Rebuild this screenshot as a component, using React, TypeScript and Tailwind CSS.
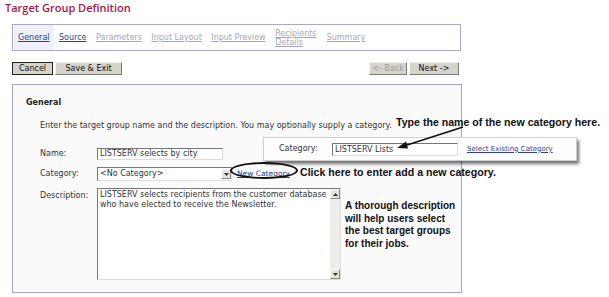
import React from 'react';

const tabs = [
  { label: 'General', active: true, enabled: true },
  { label: 'Source', enabled: true },
  { label: 'Parameters' },
  { label: 'Input Layout' },
  { label: 'Input Preview' },
  { label: 'Recipients Details', twoLine: true },
  { label: 'Summary' },
];

const TabBar = () => (
  <div className="ml-[12px] mt-[8px] flex h-[27px] w-[449px] items-stretch border border-[#a9a9d0] bg-white pl-[1px]">
    {tabs.map((t) => (
      <div
        key={t.label}
        className={`flex items-center px-[4px] mr-[1.5px] ${t.active ? 'bg-[#eef0fa]' : ''}`}
      >
        <span
          className={`underline leading-[9px] ${t.twoLine ? 'w-[42px]' : ''} ${
            t.enabled ? 'text-[#2d3f93]' : 'text-[#a6a6b8]'
          }`}
        >
          {t.label}
        </span>
      </div>
    ))}
  </div>
);

const Btn = ({
  children,
  className = '',
  disabled = false,
  focused = false,
}: {
  children: React.ReactNode;
  className?: string;
  disabled?: boolean;
  focused?: boolean;
}) => (
  <button
    className={`h-[13px] border bg-[#d6d3cb] text-[8px] leading-[11px] ${
      focused ? 'border-[#222]' : 'border-t-[#f4f4f4] border-l-[#f4f4f4] border-r-[#7a7a7a] border-b-[#7a7a7a]'
    } ${disabled ? 'text-[#9e9e9e]' : 'text-[#111]'} ${className}`}
  >
    {children}
  </button>
);

const ButtonRow = () => (
  <div className="ml-[12px] mt-[11px] flex w-[447px] justify-between">
    <div className="flex gap-[2px]">
      <Btn focused className="w-[41px]">Cancel</Btn>
      <Btn className="w-[67px]">Save &amp; Exit</Btn>
    </div>
    <div className="flex gap-[2px]">
      <Btn disabled className="w-[38px]">&lt;- Back</Btn>
      <Btn className="w-[50px]">Next -&gt;</Btn>
    </div>
  </div>
);

const Arrow = ({ up }: { up?: boolean }) => (
  <div className="flex h-[10px] w-[10px] items-center justify-center border border-t-white border-l-white border-r-[#888] border-b-[#888] bg-[#e6e3da]">
    <svg width="5" height="3" viewBox="0 0 5 3">
      <path d={up ? 'M0 3 L2.5 0 L5 3 Z' : 'M0 0 L2.5 3 L5 0 Z'} fill="#333" />
    </svg>
  </div>
);

const Panel = () => (
  <div className="ml-[12px] mt-[9px] h-[209px] w-[450px] border border-[#a3a3cc] bg-[#fafafa] pl-[13px] pt-[12px]">
    <div className="font-bold text-[#222]">General</div>
    <div className="mt-[11px] pl-[14px] text-[#333]">
      Enter the target group name and the description. You may optionally supply a category.
    </div>
    <div className="mt-[16px] flex flex-col gap-[7px] pl-[14px] text-[#333]">
      <div className="flex items-center">
        <span className="w-[57px]">Name:</span>
        <div className="h-[12px] w-[126px] border border-t-[#777] border-l-[#777] border-r-[#ddd] border-b-[#ddd] bg-white pl-[2px] leading-[10px]">
          LISTSERV selects by city
        </div>
      </div>
      <div className="flex items-center">
        <span className="w-[57px]">Category:</span>
        <div className="flex h-[14px] w-[135px] items-center border border-t-[#777] border-l-[#777] border-r-[#ddd] border-b-[#ddd] bg-white pl-[2px]">
          <span className="flex-1 leading-[10px]">&lt;No Category&gt;</span>
          <Arrow />
        </div>
        <span className="ml-[5px] text-[7.5px] text-[#2d3f93] underline">New Category</span>
      </div>
      <div className="flex items-start">
        <span className="w-[57px] pt-[2px]">Description:</span>
        <div className="flex h-[92px] w-[244px] border border-t-[#777] border-l-[#777] border-r-[#ddd] border-b-[#ddd] bg-white">
          <div className="flex-1 pl-[2px] pt-[1px] leading-[9.5px]">
            LISTSERV selects recipients from the customer database who have elected to receive the Newsletter.
          </div>
          <div className="flex w-[10px] flex-col justify-between bg-[#eeece6]">
            <Arrow up />
            <Arrow />
          </div>
        </div>
      </div>
    </div>
  </div>
);

export default function App() {
  return (
    <div className="relative h-[297px] w-[609px] overflow-hidden bg-white font-['DejaVu_Sans',Verdana,sans-serif] text-[8px]">
      <h1 className="h-[16px] pl-[5px] pt-[1px] font-['Open_Sans',sans-serif] text-[11px] font-semibold leading-[14px] text-[#a3174a]">
        Target Group Definition
      </h1>
      <TabBar />
      <ButtonRow />
      <Panel />

      {/* category popover */}
      <div className="absolute left-[263px] top-[137px] flex h-[24px] w-[314px] items-center border border-[#cfcfcf] bg-[#fdfdfd] pl-[15px] text-[#333] shadow-[2px_3px_3px_rgba(0,0,0,0.55)]">
        <span className="w-[53px]">Category:</span>
        <div className="h-[13px] w-[126px] border border-t-[#777] border-l-[#777] border-r-[#ddd] border-b-[#ddd] bg-white pl-[2px] leading-[11px]">
          LISTSERV Lists
        </div>
        <span className="ml-[9px] text-[7px] text-[#2d3f93] underline">Select Existing Category</span>
      </div>

      {/* callouts */}
      <div className="absolute left-[230px] top-[162px] h-[17px] w-[68px] rounded-[50%] border-2 border-[#111]" />
      <svg className="absolute left-0 top-0" width="609" height="297">
        <line x1="463" y1="127" x2="404" y2="146" stroke="#111" strokeWidth="1.6" />
        <path d="M397 148 L406 141.5 L408 148.5 Z" fill="#111" />
      </svg>
      <div className="absolute left-[396px] top-[115px] font-['Liberation_Sans',Arial,sans-serif] text-[10.6px] font-bold text-[#111]">
        Type the name of the new category here.
      </div>
      <div className="absolute left-[300px] top-[165px] font-['Liberation_Sans',Arial,sans-serif] text-[10.6px] font-bold text-[#111]">
        Click here to enter add a new category.
      </div>
      <div className="absolute left-[345px] top-[200px] font-['Liberation_Sans',Arial,sans-serif] text-[10px] font-bold leading-[12.5px] text-[#111]">
        A thorough description
        <br />
        will help users select
        <br />
        the best target groups
        <br />
        for their jobs.
      </div>
    </div>
  );
}
